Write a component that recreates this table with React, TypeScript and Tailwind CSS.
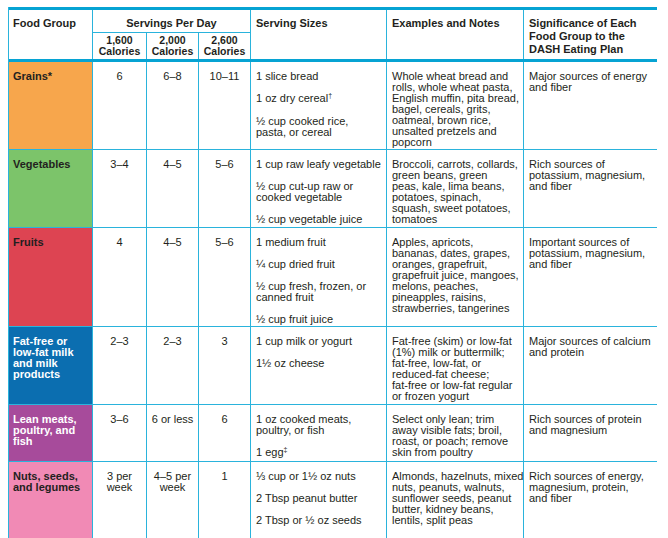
import React from "react";

type Row = {
  label: string[];
  bg: string;
  labelColor: string;
  h: string;
  s1: string[];
  s2: string[];
  s3: string[];
  sizes: React.ReactNode[][];
  examples: string[];
  sig: string[];
};

const Sup = ({ c }: { c: string }) => (
  <span className="text-[7px] relative top-[-4px]">{c}</span>
);

const rows: Row[] = [
  {
    label: ["Grains*"],
    bg: "bg-[#f7a64c]",
    labelColor: "text-[#231f20]",
    h: "h-[88px]",
    s1: ["6"],
    s2: ["6–8"],
    s3: ["10–11"],
    sizes: [["1 slice bread"], [<>1 oz dry cereal<Sup c="†" /></>], ["½ cup cooked rice,", "pasta, or cereal"]],
    examples: [
      "Whole wheat bread and",
      "rolls, whole wheat pasta,",
      "English muffin, pita bread,",
      "bagel, cereals, grits,",
      "oatmeal, brown rice,",
      "unsalted pretzels and",
      "popcorn",
    ],
    sig: ["Major sources of energy", "and fiber"],
  },
  {
    label: ["Vegetables"],
    bg: "bg-[#7cc46a]",
    labelColor: "text-[#231f20]",
    h: "h-[78px]",
    s1: ["3–4"],
    s2: ["4–5"],
    s3: ["5–6"],
    sizes: [["1 cup raw leafy vegetable"], ["½ cup cut-up raw or", "cooked vegetable"], ["½ cup vegetable juice"]],
    examples: [
      "Broccoli, carrots, collards,",
      "green beans, green",
      "peas, kale, lima beans,",
      "potatoes, spinach,",
      "squash, sweet potatoes,",
      "tomatoes",
    ],
    sig: ["Rich sources of", "potassium, magnesium,", "and fiber"],
  },
  {
    label: ["Fruits"],
    bg: "bg-[#dd4452]",
    labelColor: "text-[#231f20]",
    h: "h-[99px]",
    s1: ["4"],
    s2: ["4–5"],
    s3: ["5–6"],
    sizes: [["1 medium fruit"], ["¼ cup dried fruit"], ["½ cup fresh, frozen, or", "canned fruit"], ["½ cup fruit juice"]],
    examples: [
      "Apples, apricots,",
      "bananas, dates, grapes,",
      "oranges, grapefruit,",
      "grapefruit juice, mangoes,",
      "melons, peaches,",
      "pineapples, raisins,",
      "strawberries, tangerines",
    ],
    sig: ["Important sources of", "potassium, magnesium,", "and fiber"],
  },
  {
    label: ["Fat-free or", "low-fat milk", "and milk", "products"],
    bg: "bg-[#0b6eb0]",
    labelColor: "text-white",
    h: "h-[78px]",
    s1: ["2–3"],
    s2: ["2–3"],
    s3: ["3"],
    sizes: [["1 cup milk or yogurt"], ["1½ oz cheese"]],
    examples: [
      "Fat-free (skim) or low-fat",
      "(1%) milk or buttermilk;",
      "fat-free, low-fat, or",
      "reduced-fat cheese;",
      "fat-free or low-fat regular",
      "or frozen yogurt",
    ],
    sig: ["Major sources of calcium", "and protein"],
  },
  {
    label: ["Lean meats,", "poultry, and", "fish"],
    bg: "bg-[#a74b9b]",
    labelColor: "text-white",
    h: "h-[57px]",
    s1: ["3–6"],
    s2: ["6 or less"],
    s3: ["6"],
    sizes: [["1 oz cooked meats,", "poultry, or fish"], [<>1 egg<Sup c="‡" /></>]],
    examples: [
      "Select only lean; trim",
      "away visible fats; broil,",
      "roast, or poach; remove",
      "skin from poultry",
    ],
    sig: ["Rich sources of protein", "and magnesium"],
  },
  {
    label: ["Nuts, seeds,", "and legumes"],
    bg: "bg-[#f18ab5]",
    labelColor: "text-[#231f20]",
    h: "h-[100px]",
    s1: ["3 per", "week"],
    s2: ["4–5 per", "week"],
    s3: ["1"],
    sizes: [
      ["⅓ cup or 1½ oz nuts"],
      ["2 Tbsp peanut butter"],
      ["2 Tbsp or ½ oz seeds"],
      ["½ cup cooked legumes", "(dried beans, peas)"],
    ],
    examples: [
      "Almonds, hazelnuts, mixed",
      "nuts, peanuts, walnuts,",
      "sunflower seeds, peanut",
      "butter, kidney beans,",
      "lentils, split peas",
    ],
    sig: ["Rich sources of energy,", "magnesium, protein,", "and fiber"],
  },
];

const cols = "grid grid-cols-[84px_54px_52px_52px_136px_137px_133px]";
const line = "border-[#2ab3dc]";

function Lines({ items }: { items: React.ReactNode[] }) {
  return (
    <>
      {items.map((t, i) => (
        <div key={i} className="whitespace-nowrap">
          {t}
        </div>
      ))}
    </>
  );
}

export default function App() {
  return (
    <div className="bg-white w-[668px] h-[538px] overflow-hidden font-['Liberation_Sans',Arial,sans-serif] text-[#231f20] text-[11px] leading-[11px]">
      <div className={`ml-[8px] mt-[7px] w-[649px] border-l ${line}`}>
        {/* header */}
        <div
          className={`${cols} grid-rows-[23px_26px] border-t-[3px] border-b-[3px] border-[#06a3d3] font-bold`}
        >
          <div className={`row-span-2 border-r ${line} pl-[4px] pt-[7px] leading-[13px]`}>Food Group</div>
          <div className={`col-span-3 border-r border-b ${line} text-center pt-[7px] leading-[13px]`}>
            Servings Per Day
          </div>
          <div className={`row-span-2 border-r ${line} pl-[5px] pt-[7px] leading-[13px]`}>Serving Sizes</div>
          <div className={`row-span-2 border-r ${line} pl-[5px] pt-[7px] leading-[13px]`}>Examples and Notes</div>
          <div className="row-span-2 pl-[5px] pt-[7px] leading-[13px]">
            <div>Significance of Each</div>
            <div>Food Group to the</div>
            <div>DASH Eating Plan</div>
          </div>
          {["1,600", "2,000", "2,600"].map((c) => (
            <div key={c} className={`border-r ${line} text-center pt-[2px] text-[10.5px] leading-[11px]`}>
              <div>{c}</div>
              <div>Calories</div>
            </div>
          ))}
        </div>
        {/* body rows */}
        {rows.map((r, i) => (
          <div key={i} className={`${cols} ${r.h} border-b ${line}`}>
            <div className={`${r.bg} ${r.labelColor} border-r ${line} pl-[4px] pt-[9px] font-bold`}>
              <Lines items={r.label} />
            </div>
            <div className={`border-r ${line} pt-[9px] text-center`}>
              <Lines items={r.s1} />
            </div>
            <div className={`border-r ${line} pt-[9px] text-center`}>
              <Lines items={r.s2} />
            </div>
            <div className={`border-r ${line} pt-[9px] text-center`}>
              <Lines items={r.s3} />
            </div>
            <div className={`border-r ${line} pt-[9px] pl-[5px] flex flex-col gap-[11px]`}>
              {r.sizes.map((p, j) => (
                <div key={j}>
                  <Lines items={p} />
                </div>
              ))}
            </div>
            <div className={`border-r ${line} pt-[9px] pl-[5px]`}>
              <Lines items={r.examples} />
            </div>
            <div className="pt-[9px] pl-[5px]">
              <Lines items={r.sig} />
            </div>
          </div>
        ))}
      </div>
    </div>
  );
}
